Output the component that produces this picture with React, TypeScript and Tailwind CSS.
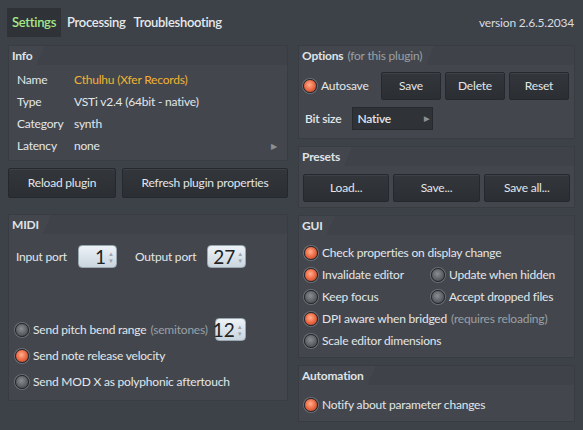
import React from "react";

const font = { fontFamily: '"Segoe UI", Lato, "Noto Sans", sans-serif' };

const Led = ({ on }: { on?: boolean }) => (
  <span
    className={
      "inline-block w-[14px] h-[14px] rounded-full border border-[#24272b] shrink-0 " +
      (on
        ? "bg-[radial-gradient(circle_at_45%_40%,#ffb090_0%,#f0704a_45%,#b53a22_100%)] shadow-[0_0_0_1px_#6a6e73]"
        : "bg-[radial-gradient(circle_at_45%_40%,#8a8e92_0%,#5e6266_55%,#3c3f43_100%)] shadow-[0_0_0_1px_#6a6e73]")
    }
  />
);

const Panel = ({
  title,
  note,
  children,
  className = "",
}: {
  title: string;
  note?: string;
  children: React.ReactNode;
  className?: string;
}) => (
  <div className={"bg-[#43474d] border border-[#393d42] flex flex-col " + className}>
    <div className="flex h-[19px] bg-[#3f4349]">
      <div className="relative flex items-center pl-[3px] pr-[12px] bg-[#43474d] [clip-path:polygon(0_0,100%_0,calc(100%-8px)_100%,0_100%)]">
        <span className="font-bold text-[#dfe3e7]">{title}</span>
        {note && <span className="ml-[4px] text-[#9aa0a6]">{note}</span>}
      </div>
    </div>
    {children}
  </div>
);

const Btn = ({ children, className = "" }: { children: React.ReactNode; className?: string }) => (
  <div
    className={
      "flex items-center justify-center bg-gradient-to-b from-[#33373c] to-[#2b2e33] border border-[#25282c] rounded-[2px] text-[#e2e6ea] shadow-[inset_0_1px_0_#3e4248] " +
      className
    }
  >
    {children}
  </div>
);

const Spin = ({ value, className = "" }: { value: string; className?: string }) => (
  <div
    className={
      "flex items-center justify-end h-[23px] rounded-[4px] bg-gradient-to-b from-[#eef3f7] to-[#c9d5df] border border-[#9aa6b0] text-[#222] text-[19px] leading-none pr-[2px] tracking-normal " +
      className
    }
  >
    <span className="mr-[2px]">{value}</span>
    <span className="flex flex-col text-[6px] leading-[7px] text-[#9aa4ad]">
      <span>▲</span>
      <span>▼</span>
    </span>
  </div>
);

const Opt = ({ on, label, note }: { on?: boolean; label: string; note?: string }) => (
  <div className="flex items-center gap-[4px] h-[22px] whitespace-nowrap">
    <Led on={on} />
    <span className="text-[#e2e6ea]">{label}</span>
    {note && <span className="text-[#9aa0a6]">{note}</span>}
  </div>
);

const InfoRow = ({ k, v, gold, arrow }: { k: string; v: string; gold?: boolean; arrow?: boolean }) => (
  <div className="flex items-center h-[22px]">
    <span className="w-[57px] text-[#e2e6ea]">{k}</span>
    <span className={"flex-1 " + (gold ? "text-[#f2b233]" : "text-[#e2e6ea]")}>{v}</span>
    {arrow && <span className="text-[8px] text-[#8a9096] mr-[10px]">▶</span>}
  </div>
);

export default function App() {
  return (
    <div style={font} className="w-[583px] h-[430px] bg-[#3d4148] text-[12px] tracking-[-0.2px] text-[#e2e6ea] overflow-hidden flex flex-col">
      <div className="flex items-center h-[38px] pt-[7px] pl-[7px] pr-[9px]">
        <div className="h-[29px] flex items-center px-[5px] bg-[#2f3237] text-[#a6e68a] font-semibold text-[13px] tracking-[-0.3px]">Settings</div>
        <div className="px-[6px] font-semibold text-[#e6e9ec] text-[13px] tracking-[-0.3px]">Processing</div>
        <div className="px-[2px] font-semibold text-[#e6e9ec] text-[13px] tracking-[-0.3px]">Troubleshooting</div>
        <div className="ml-auto text-[#d8dce0]">version 2.6.5.2034</div>
      </div>
      <div className="flex gap-[10px] px-[8px] pt-[7px]">
        <div className="w-[280px] flex flex-col">
          <Panel title="Info" className="h-[116px]">
            <div className="pl-[8px] pt-[4px]">
              <InfoRow k="Name" v="Cthulhu (Xfer Records)" gold />
              <InfoRow k="Type" v="VSTi v2.4 (64bit - native)" />
              <InfoRow k="Category" v="synth" />
              <InfoRow k="Latency" v="none" arrow />
            </div>
          </Panel>
          <div className="flex gap-[6px] mt-[7px]">
            <Btn className="w-[108px] h-[30px]">Reload plugin</Btn>
            <Btn className="flex-1 h-[30px]">Refresh plugin properties</Btn>
          </div>
          <Panel title="MIDI" className="h-[187px] mt-[16px]">
            <div className="flex items-center pl-[7px] pt-[11px]">
              <span>Input port</span>
              <Spin value="1" className="w-[39px] ml-[11px]" />
              <span className="ml-[18px]">Output port</span>
              <Spin value="27" className="w-[39px] ml-[11px]" />
            </div>
            <div className="flex flex-col gap-[4px] pl-[6px] mt-[50px]">
              <div className="flex items-center">
                <Opt label="Send pitch bend range" note="(semitones)" />
                <Spin value="12" className="w-[31px] ml-[7px]" />
              </div>
              <Opt on label="Send note release velocity" />
              <Opt label="Send MOD X as polyphonic aftertouch" />
            </div>
          </Panel>
        </div>
        <div className="flex-1 flex flex-col">
          <Panel title="Options" note="(for this plugin)" className="h-[94px]">
            <div className="flex items-center pl-[4px] pr-[5px] pt-[7px]">
              <Opt on label="Autosave" />
              <div className="ml-auto flex gap-[4px]">
                <Btn className="w-[60px] h-[28px]">Save</Btn>
                <Btn className="w-[60px] h-[28px]">Delete</Btn>
                <Btn className="w-[60px] h-[28px]">Reset</Btn>
              </div>
            </div>
            <div className="flex items-center pl-[6px] pt-[7px]">
              <span className="font-semibold">Bit size</span>
              <div className="ml-[11px] w-[81px] h-[23px] flex items-center justify-between px-[4px] bg-[#2f3237] border border-[#26292d] font-semibold">
                <span>Native</span>
                <span className="text-[7px] text-[#8a9096]">▶</span>
              </div>
            </div>
          </Panel>
          <Panel title="Presets" className="h-[62px] mt-[7px]">
            <div className="flex gap-[4px] px-[4px] pt-[8px]">
              <Btn className="flex-1 h-[28px]">Load...</Btn>
              <Btn className="flex-1 h-[28px]">Save...</Btn>
              <Btn className="flex-1 h-[28px]">Save all...</Btn>
            </div>
          </Panel>
          <Panel title="GUI" className="h-[143px] mt-[7px]">
            <div className="grid grid-cols-[127px_1fr] pl-[5px] pt-[7px]">
              <div className="col-span-2"><Opt on label="Check properties on display change" /></div>
              <Opt on label="Invalidate editor" />
              <Opt label="Update when hidden" />
              <Opt label="Keep focus" />
              <Opt label="Accept dropped files" />
              <div className="col-span-2"><Opt on label="DPI aware when bridged" note="(requires reloading)" /></div>
              <div className="col-span-2"><Opt label="Scale editor dimensions" /></div>
            </div>
          </Panel>
          <Panel title="Automation" className="h-[57px] mt-[7px]">
            <div className="pl-[5px] pt-[9px]">
              <Opt on label="Notify about parameter changes" />
            </div>
          </Panel>
        </div>
      </div>
    </div>
  );
}
